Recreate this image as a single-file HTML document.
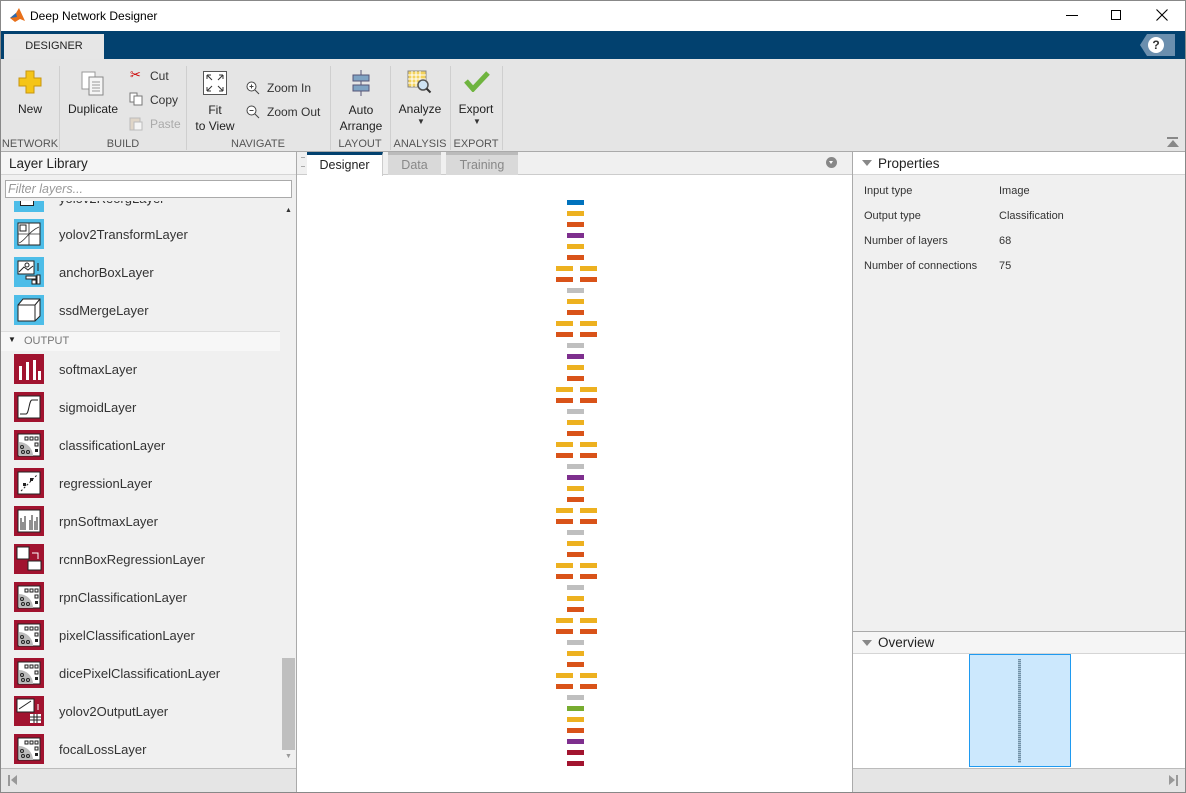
<!DOCTYPE html>
<html><head><meta charset="utf-8"><style>
*{box-sizing:border-box;margin:0;padding:0}
body{width:1186px;height:793px;overflow:hidden;font-family:"Liberation Sans",sans-serif;font-size:12px;color:#333;background:#fff;position:relative}
.a{position:absolute}
.tb{font-size:12px;color:#222;text-align:center}
.gl{position:absolute;top:138px;font-size:11px;color:#555;text-align:center}
.sep{position:absolute;top:66px;width:1px;height:84px;background:#cfcfcf}
.item{position:absolute;left:14px;height:30px;width:260px}
.ic{position:absolute;left:0;top:0;width:30px;height:30px}
.item span{position:absolute;left:45px;top:8px;font-size:13px;color:#333}
.bl{position:absolute;height:5px;width:17px}
</style></head><body>
<div class="a" style="left:0;top:0;width:1186px;height:793px;border:1px solid #888;z-index:9;pointer-events:none"></div>
<svg class="a" style="left:9px;top:7px" width="17" height="16"><polygon points="1,11 7,6 10,1 16,14 11,12 6,15" fill="#e8701a"/><polygon points="1,11 7,6 8,10" fill="#2a6ab0"/></svg>
<div class="a" style="left:30px;top:9px;font-size:12px;color:#000">Deep Network Designer</div>
<div class="a" style="left:1066px;top:15px;width:12px;height:1px;background:#000"></div>
<div class="a" style="left:1111px;top:10px;width:10px;height:10px;border:1px solid #000"></div>
<svg class="a" style="left:1156px;top:9px" width="12" height="12"><path d="M0.5 0.5l11 11M11.5 0.5l-11 11" stroke="#000" stroke-width="1.1"/></svg>
<div class="a" style="left:0;top:31px;width:1186px;height:28px;background:#02416f"></div>
<div class="a" style="left:4px;top:34px;width:100px;height:25px;background:#e6e6e6;text-align:center;line-height:24px;font-size:11px;color:#222">DESIGNER</div>
<div class="a" style="left:1140px;top:34px;width:35px;height:22px;background:#6b8fae;clip-path:polygon(7px 0,100% 0,100% 100%,7px 100%,0 50%)"></div>
<div class="a" style="left:1148px;top:37px;width:16px;height:16px;border-radius:50%;background:#fff;color:#333;font-weight:bold;font-size:12px;text-align:center;line-height:16px">?</div>
<div class="a" style="left:0;top:59px;width:1186px;height:93px;background:#e5e5e5;border-bottom:1px solid #aaa"></div>
<svg class="a" style="left:18px;top:70px" width="24" height="24"><path d="M8 1h8v7h7v8h-7v7H8v-7H1V8h7z" fill="#f5c518" stroke="#c89510"/></svg>
<div class="a tb" style="left:10px;top:102px;width:40px">New</div>
<svg class="a" style="left:80px;top:70px" width="26" height="26"><rect x="2" y="2" width="13" height="17" fill="#fff" stroke="#999"/><rect x="9" y="7" width="14" height="18" fill="#f5f5f5" stroke="#888"/><path d="M12 12h8M12 15h8M12 18h8M12 21h8" stroke="#999"/></svg>
<div class="a tb" style="left:66px;top:102px;width:54px">Duplicate</div>
<div class="a" style="left:130px;top:67px;color:#c00;font-size:13px">✂</div>
<div class="a" style="left:150px;top:69px">Cut</div>
<svg class="a" style="left:129px;top:92px" width="14" height="14"><rect x="1" y="1" width="7" height="9" fill="#fff" stroke="#777"/><rect x="5" y="4" width="8" height="9" fill="#fff" stroke="#777"/></svg>
<div class="a" style="left:150px;top:93px">Copy</div>
<svg class="a" style="left:129px;top:116px" width="14" height="15"><rect x="1" y="2" width="10" height="12" fill="#e0d6c8" stroke="#bbb"/><rect x="5" y="6" width="8" height="8" fill="#f5f5f5" stroke="#bbb"/></svg>
<div class="a" style="left:150px;top:117px;color:#aaa">Paste</div>
<div class="sep" style="left:59px"></div><div class="sep" style="left:186px"></div><div class="sep" style="left:330px"></div><div class="sep" style="left:390px"></div><div class="sep" style="left:450px"></div><div class="sep" style="left:502px"></div>
<svg class="a" style="left:203px;top:71px" width="24" height="24"><rect x="0.5" y="0.5" width="23" height="23" fill="#fff" stroke="#555"/><path d="M4 4l5 5M4 4h4M4 4v4M20 4l-5 5M20 4h-4M20 4v4M4 20l5-5M4 20h4M4 20v-4M20 20l-5-5M20 20h-4M20 20v-4" stroke="#333" fill="none"/></svg>
<div class="a tb" style="left:190px;top:102px;width:50px;line-height:16px">Fit<br>to View</div>
<svg class="a" style="left:246px;top:81px" width="14" height="14"><circle cx="5.5" cy="5.5" r="4.5" fill="#fff" stroke="#444"/><path d="M9 9l4 4M3.5 5.5h4M5.5 3.5v4" stroke="#444"/></svg>
<div class="a" style="left:267px;top:81px">Zoom In</div>
<svg class="a" style="left:246px;top:105px" width="14" height="14"><circle cx="5.5" cy="5.5" r="4.5" fill="#fff" stroke="#444"/><path d="M9 9l4 4M3.5 5.5h4" stroke="#444"/></svg>
<div class="a" style="left:267px;top:105px">Zoom Out</div>
<svg class="a" style="left:351px;top:70px" width="20" height="26"><path d="M10 0v26" stroke="#557"/><rect x="2" y="5" width="16" height="6" fill="#7fa3c3" stroke="#557"/><rect x="2" y="15" width="16" height="6" fill="#7fa3c3" stroke="#557"/></svg>
<div class="a tb" style="left:335px;top:102px;width:52px;line-height:16px">Auto<br>Arrange</div>
<svg class="a" style="left:407px;top:70px" width="26" height="26"><rect x="1" y="1" width="18" height="16" fill="#f3d25b" stroke="#888"/><path d="M1 5h18M1 9h18M1 13h18M5 1v16M9 1v16M13 1v16" stroke="#fff"/><circle cx="16" cy="15" r="5" fill="#cfe3f3" stroke="#555" stroke-width="1.5"/><path d="M19.5 18.5l4 4" stroke="#333" stroke-width="2"/></svg>
<div class="a tb" style="left:393px;top:102px;width:54px">Analyze</div>
<div class="a" style="left:417px;top:117px;font-size:8px">▼</div>
<svg class="a" style="left:464px;top:70px" width="26" height="22"><path d="M2 11l7 8L24 3" stroke="#6fb43f" stroke-width="5" fill="none"/></svg>
<div class="a tb" style="left:453px;top:102px;width:46px">Export</div>
<div class="a" style="left:473px;top:117px;font-size:8px">▼</div>
<div class="gl" style="left:0;width:60px">NETWORK</div>
<div class="gl" style="left:60px;width:126px">BUILD</div>
<div class="gl" style="left:186px;width:144px">NAVIGATE</div>
<div class="gl" style="left:330px;width:60px">LAYOUT</div>
<div class="gl" style="left:390px;width:60px">ANALYSIS</div>
<div class="gl" style="left:450px;width:52px">EXPORT</div>
<div class="a" style="left:1167px;top:137px;width:11px;height:2px;background:#888"></div>
<div class="a" style="left:1167px;top:140px;width:0;height:0;border-left:6px solid transparent;border-right:6px solid transparent;border-bottom:7px solid #888"></div>
<div class="a" style="left:0;top:152px;width:297px;height:641px;background:#f0f0f0;border-right:1px solid #aaa"></div>
<div class="a" style="left:0;top:152px;width:296px;height:23px;background:#f5f5f5;border-bottom:1px solid #d5d5d5"></div>
<div class="a" style="left:9px;top:156px;font-size:13.5px;color:#222">Layer Library</div>
<div class="a" style="left:5px;top:180px;width:287px;height:18px;background:#fff;border:1px solid #aaa;font-style:italic;color:#999;font-size:12.5px;padding-left:2px;line-height:16px">Filter layers...</div>
<div class="a" style="left:0;top:201px;width:280px;height:12px;overflow:hidden">
 <div class="a" style="left:14px;top:-19px;width:30px;height:30px;background:#4dbde8"><div class="a" style="left:6px;top:10px;width:14px;height:14px;background:#fff;border:1px solid #222"></div></div>
 <div class="a" style="left:59px;top:-10px;font-size:13px;color:#333">yolov2ReorgLayer</div>
</div>
<div class="a" style="left:285px;top:207px;font-size:7px;color:#333">▲</div>
<div class="item" style="top:219px"><svg class="ic"><rect width="30" height="30" fill="#4dbde8"/><rect x="4" y="4" width="22" height="22" fill="#fff" stroke="#222"/><path d="M5 24c6-2 10-12 20-16M15 4v22M4 15h22" stroke="#333" fill="none" stroke-width=".8"/><rect x="6" y="6" width="6" height="6" fill="none" stroke="#222"/></svg><span>yolov2TransformLayer</span></div>
<div class="item" style="top:257px"><svg class="ic"><rect width="30" height="30" fill="#4dbde8"/><rect x="4" y="4" width="16" height="13" fill="#fff" stroke="#222"/><path d="M5 15l5-5 4 3 5-4" stroke="#222" fill="none"/><circle cx="13" cy="8" r="2" fill="none" stroke="#222"/><path d="M24 6v8" stroke="#222"/><rect x="12" y="19" width="10" height="3" fill="#fff" stroke="#222"/><rect x="23" y="18" width="3" height="9" fill="#fff" stroke="#222"/><rect x="18" y="23" width="4" height="4" fill="#fff" stroke="#222"/></svg><span>anchorBoxLayer</span></div>
<div class="item" style="top:295px"><svg class="ic"><rect width="30" height="30" fill="#4dbde8"/><path d="M4 10l5-6h17v17l-5 5H4z" fill="#fff" stroke="#222"/><path d="M4 10h17v16M21 10l5-6" stroke="#222" fill="none"/></svg><span>ssdMergeLayer</span></div>
<div class="a" style="left:0;top:331px;width:280px;height:20px;background:#f7f7f7;border-top:1px solid #ddd"></div>
<div class="a" style="left:8px;top:335px;font-size:8px;color:#222">▼</div>
<div class="a" style="left:24px;top:335px;font-size:11px;color:#777">OUTPUT</div>
<div class="item" style="top:354px"><svg class="ic"><rect width="30" height="30" fill="#a1132f"/><path d="M5 26V12h3v14zM12 26V8h3v18zM19 26V6h3v20zM24 26V17h3v9z" fill="#fff"/></svg><span>softmaxLayer</span></div>
<div class="item" style="top:392px"><svg class="ic"><rect width="30" height="30" fill="#a1132f"/><rect x="4" y="4" width="22" height="22" fill="#fff" stroke="#222"/><path d="M6 22h6c3 0 3-14 6-14h6" stroke="#222" fill="none"/></svg><span>sigmoidLayer</span></div>
<div class="item" style="top:430px"><svg class="ic"><use href="#cls"/></svg><span>classificationLayer</span></div>
<div class="item" style="top:468px"><svg class="ic"><rect width="30" height="30" fill="#a1132f"/><rect x="4" y="4" width="22" height="22" fill="#fff" stroke="#222"/><path d="M7 23L23 7" stroke="#222" stroke-dasharray="2 2"/><rect x="9" y="15" width="3" height="3" fill="#222"/><rect x="16" y="10" width="3" height="3" fill="#222"/></svg><span>regressionLayer</span></div>
<div class="item" style="top:506px"><svg class="ic"><rect width="30" height="30" fill="#a1132f"/><rect x="4" y="4" width="22" height="22" fill="#fff" stroke="#222"/><path d="M7 24V12M9 24V16M11 24V10M16 24V14M18 24V9M21 24V15M23 24V11" stroke="#222"/></svg><span>rpnSoftmaxLayer</span></div>
<div class="item" style="top:544px"><svg class="ic"><rect width="30" height="30" fill="#a1132f"/><rect x="3" y="3" width="12" height="12" fill="#fff" stroke="#222"/><path d="M18 9h6v6" stroke="#fff" fill="none"/><rect x="14" y="17" width="13" height="9" fill="#fff" stroke="#222"/></svg><span>rcnnBoxRegressionLayer</span></div>
<div class="item" style="top:582px"><svg class="ic"><use href="#cls"/></svg><span>rpnClassificationLayer</span></div>
<div class="item" style="top:620px"><svg class="ic"><use href="#cls"/></svg><span>pixelClassificationLayer</span></div>
<div class="item" style="top:658px"><svg class="ic"><use href="#cls"/></svg><span>dicePixelClassificationLayer</span></div>
<div class="item" style="top:696px"><svg class="ic"><rect width="30" height="30" fill="#a1132f"/><rect x="3" y="3" width="17" height="13" fill="#fff" stroke="#222"/><path d="M5 13l12-8" stroke="#222"/><rect x="16" y="18" width="11" height="9" fill="#fff"/><path d="M16 21h11M16 24h11M20 18v9M23 18v9" stroke="#222"/><path d="M24 8v6" stroke="#fff"/></svg><span>yolov2OutputLayer</span></div>
<div class="item" style="top:734px"><svg class="ic"><use href="#cls"/></svg><span>focalLossLayer</span></div>
<svg width="0" height="0" style="position:absolute"><defs><g id="cls"><rect width="30" height="30" fill="#a1132f"/><rect x="4" y="4" width="22" height="22" fill="#fff" stroke="#222"/><path d="M5 12a14 14 0 0 1 14 14H5z" fill="#bbb"/><rect x="11" y="7" width="3" height="3" fill="#fff" stroke="#222"/><rect x="16" y="7" width="3" height="3" fill="#fff" stroke="#222"/><rect x="21" y="7" width="3" height="3" fill="#fff" stroke="#222"/><rect x="21" y="13" width="3" height="3" fill="#fff" stroke="#222"/><rect x="21" y="19" width="3" height="3" fill="#222"/><circle cx="8" cy="17" r="1.5" fill="none" stroke="#222"/><circle cx="9" cy="22" r="1.5" fill="none" stroke="#222"/><circle cx="14" cy="22" r="1.5" fill="none" stroke="#222"/></g></defs></svg>
<div class="a" style="left:282px;top:658px;width:13px;height:92px;background:#bfbfbf"></div>
<div class="a" style="left:285px;top:753px;font-size:7px;color:#999">▼</div>
<div class="a" style="left:0;top:768px;width:296px;height:25px;background:#e5e5e5;border-top:1px solid #bbb"></div>
<div class="a" style="left:8px;top:775px;width:2px;height:11px;background:#999"></div>
<div class="a" style="left:11px;top:775px;border-top:5.5px solid transparent;border-bottom:5.5px solid transparent;border-right:6px solid #999"></div>
<div class="a" style="left:297px;top:152px;width:556px;height:23px;background:#f0f0f0;border-bottom:1px solid #ccc"></div>
<div class="a" style="left:301px;top:157px;width:4px;height:10px;border-top:1px solid #aaa;border-bottom:1px solid #aaa;"></div>
<div class="a" style="left:307px;top:152px;width:76px;height:24px;background:#fff;border-top:3px solid #02416f;border-right:1px solid #ccc;text-align:center;line-height:20px;font-size:12.5px;color:#222">Designer</div>
<div class="a" style="left:388px;top:152px;width:53px;height:23px;background:#d9d9d9;border-top:3px solid #bbb;text-align:center;line-height:20px;font-size:12.5px;color:#888">Data</div>
<div class="a" style="left:446px;top:152px;width:72px;height:23px;background:#d9d9d9;border-top:3px solid #bbb;text-align:center;line-height:20px;font-size:12.5px;color:#888">Training</div>
<div class="a" style="left:826px;top:157px;width:11px;height:11px;border-radius:50%;background:#888"></div>
<div class="a" style="left:829px;top:161px;border-left:2.5px solid transparent;border-right:2.5px solid transparent;border-top:3px solid #fff"></div>
<div class="a" style="left:852px;top:152px;width:1px;height:641px;background:#aaa"></div>
<div id="net"></div>
<div class="a" style="left:853px;top:152px;width:333px;height:480px;background:#f0f0f0"></div>
<div class="a" style="left:853px;top:152px;width:333px;height:23px;background:#fff;border-bottom:1px solid #d5d5d5"></div>
<div class="a" style="left:862px;top:160px;border-left:5px solid transparent;border-right:5px solid transparent;border-top:6px solid #888"></div>
<div class="a" style="left:878px;top:156px;font-size:13.5px;color:#222">Properties</div>
<div class="a" style="left:864px;top:185px;font-size:11px;color:#333">Input type</div><div class="a" style="left:999px;top:185px;font-size:11px;color:#333">Image</div>
<div class="a" style="left:864px;top:210px;font-size:11px;color:#333">Output type</div><div class="a" style="left:999px;top:210px;font-size:11px;color:#333">Classification</div>
<div class="a" style="left:864px;top:235px;font-size:11px;color:#333">Number of layers</div><div class="a" style="left:999px;top:235px;font-size:11px;color:#333">68</div>
<div class="a" style="left:864px;top:260px;font-size:11px;color:#333">Number of connections</div><div class="a" style="left:999px;top:260px;font-size:11px;color:#333">75</div>
<div class="a" style="left:853px;top:631px;width:333px;height:23px;background:#f5f5f5;border-top:1px solid #aaa;border-bottom:1px solid #d5d5d5"></div>
<div class="a" style="left:862px;top:640px;border-left:5px solid transparent;border-right:5px solid transparent;border-top:6px solid #888"></div>
<div class="a" style="left:878px;top:635px;font-size:13.5px;color:#222">Overview</div>
<div class="a" style="left:969px;top:654px;width:102px;height:113px;background:#cce8fd;border:1px solid #1e9af0"></div>
<div class="a" style="left:1018px;top:659px;width:3px;height:104px;background:repeating-linear-gradient(#6f8fa6 0 1px,#a8c4d8 1px 2px)"></div>
<div class="a" style="left:853px;top:768px;width:333px;height:25px;background:#e5e5e5;border-top:1px solid #bbb"></div>
<div class="a" style="left:1169px;top:775px;border-top:5.5px solid transparent;border-bottom:5.5px solid transparent;border-left:6px solid #999"></div>
<div class="a" style="left:1176px;top:775px;width:2px;height:11px;background:#999"></div>
<script>
var seq="B Y O P Y O y o G Y O y o G P Y O y o G Y O y o G P Y O y o G Y O y o G Y O y o G Y O y o G g Y O P R R".split(" ");
var c={B:"#0072bd",Y:"#edb120",O:"#d95319",P:"#7e2f8e",G:"#bfbfbf",g:"#77ac30",R:"#a2142f",y:"#edb120",o:"#d95319"};
var h="",y=200;
for(var i=0;i<seq.length;i++){var s=seq[i];
if(s=="y"||s=="o"){h+='<div class="bl" style="left:556px;top:'+y+'px;background:'+c[s]+'"></div><div class="bl" style="left:580px;top:'+y+'px;background:'+c[s]+'"></div>';}
else h+='<div class="bl" style="left:567px;top:'+y+'px;background:'+c[s]+'"></div>';
y+=11;}
document.getElementById("net").outerHTML=h;
</script>
</body></html>
